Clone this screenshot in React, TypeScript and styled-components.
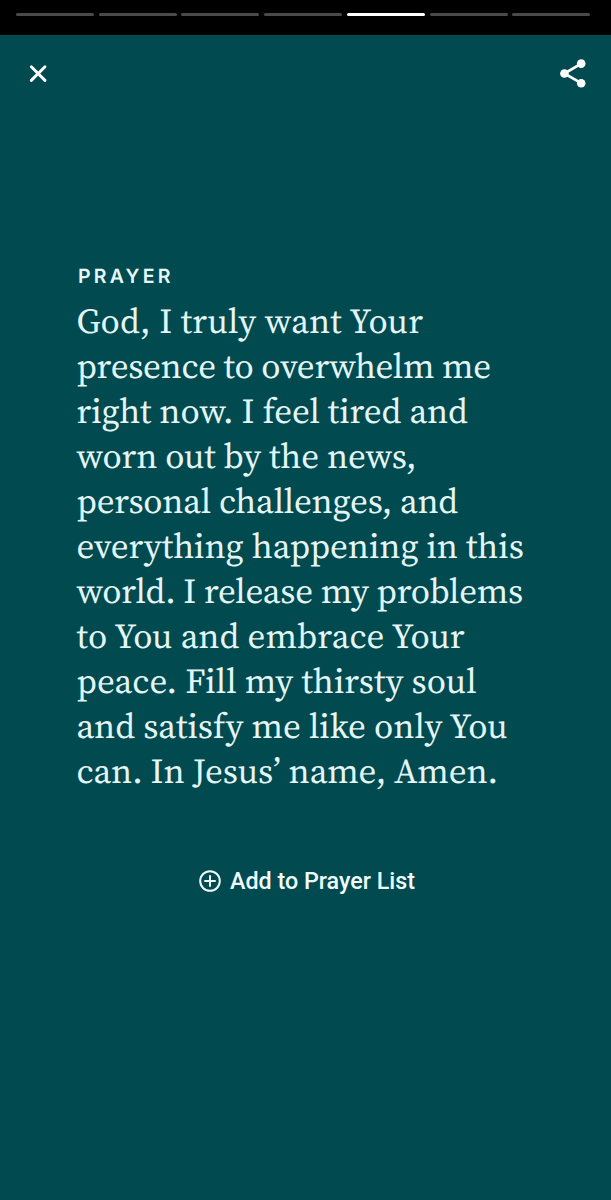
import React from "react";
import styled, { createGlobalStyle } from "styled-components";

const GlobalStyle = createGlobalStyle`
  *, *::before, *::after { box-sizing: border-box; }
  body { margin: 0; background: #004a50; text-rendering: geometricPrecision; }
  button { padding: 0; border: 0; background: none; color: inherit; font: inherit; cursor: pointer; }
`;

const Screen = styled.main`
  display: flex;
  flex-direction: column;
  min-height: 1200px;
  background: #004a50;
  color: #ffffff;
`;

const StoryProgress = styled.div`
  display: flex;
  gap: 4.8px;
  height: 35px;
  padding: 12.6px 20.8px 0 16px;
  background: #000000;
`;

const Segment = styled.span<{ $active: boolean }>`
  flex: 1;
  height: 3.2px;
  border-radius: 2px;
  background: ${({ $active }) => ($active ? "#ffffff" : "#4a4a4a")};
`;

const TopBar = styled.header`
  display: flex;
  align-items: center;
  justify-content: space-between;
  height: 76px;
  padding: 0 22px 0 26px;
`;

const IconButton = styled.button`
  display: flex;
`;

const Content = styled.section`
  display: flex;
  flex-direction: column;
  padding: 152px 60px 0 76.5px;
`;

const Label = styled.h1`
  margin: 0;
  padding-left: 1.5px;
  font: 600 19.5px/26px Inter, "Liberation Sans", sans-serif;
  letter-spacing: 3.2px;
  color: #e8f8f8;
`;

const Prayer = styled.p`
  margin: 10px 0 0;
  font: 400 35px/45px "Source Serif 4", "Liberation Serif", serif;
  color: #e4f5f6;
`;

const Line = styled.span<{ $tracking: number }>`
  display: block;
  white-space: nowrap;
  letter-spacing: ${({ $tracking }) => $tracking}px;
`;

const AddButton = styled.button`
  display: flex;
  align-items: center;
  align-self: center;
  gap: 9px;
  margin-top: 72px;
  && { padding-left: 3px; font: 500 23.3px/30px Roboto, "Liberation Sans", sans-serif; color: #f0fcfc; }
`;

const segments = 7;
const activeSegment = 4;

const prayerLines = [
  { text: "God, I truly want Your", tracking: 0.22 },
  { text: "presence to overwhelm me", tracking: -0.33 },
  { text: "right now. I feel tired and", tracking: -0.09 },
  { text: "worn out by the news,", tracking: -0.13 },
  { text: "personal challenges, and", tracking: -0.26 },
  { text: "everything happening in this", tracking: -0.08 },
  { text: "world. I release my problems", tracking: -0.26 },
  { text: "to You and embrace Your", tracking: 0.01 },
  { text: "peace. Fill my thirsty soul", tracking: 0.03 },
  { text: "and satisfy me like only You", tracking: -0.04 },
  { text: "can. In Jesus’ name, Amen.", tracking: -0.1 },
];

const CloseIcon = () => (
  <svg width="24" height="24" viewBox="0 0 24 24" fill="none" stroke="currentColor" strokeWidth="2.9" strokeLinecap="round">
    <path d="M5.3 5.7 19 19.4M19 5.7 5.3 19.4" />
  </svg>
);

const ShareIcon = () => (
  <svg width="32" height="32" viewBox="0 0 32 32" fill="currentColor">
    <path d="M24.2 6.6 7.4 16.5 24.2 26.2" fill="none" stroke="currentColor" strokeWidth="2.7" />
    <circle cx="24.2" cy="6.6" r="4.3" />
    <circle cx="7.4" cy="16.5" r="4.3" />
    <circle cx="24.2" cy="26.2" r="4.3" />
  </svg>
);

const AddIcon = () => (
  <svg width="22" height="22" viewBox="0 0 22 22" fill="none" stroke="currentColor" strokeWidth="2" strokeLinecap="round">
    <circle cx="11" cy="11" r="9.8" />
    <path d="M11 6v10M6 11h10" />
  </svg>
);

export default function App() {
  return (
    <Screen>
      <GlobalStyle />
      <StoryProgress>
        {Array.from({ length: segments }, (_, i) => (
          <Segment key={i} $active={i === activeSegment} />
        ))}
      </StoryProgress>
      <TopBar>
        <IconButton aria-label="Close"><CloseIcon /></IconButton>
        <IconButton aria-label="Share"><ShareIcon /></IconButton>
      </TopBar>
      <Content>
        <Label>PRAYER</Label>
        <Prayer>
          {prayerLines.map(({ text, tracking }) => (
            <Line key={text} $tracking={tracking}>{text}</Line>
          ))}
        </Prayer>
      </Content>
      <AddButton>
        <AddIcon />
        Add to Prayer List
      </AddButton>
    </Screen>
  );
}
